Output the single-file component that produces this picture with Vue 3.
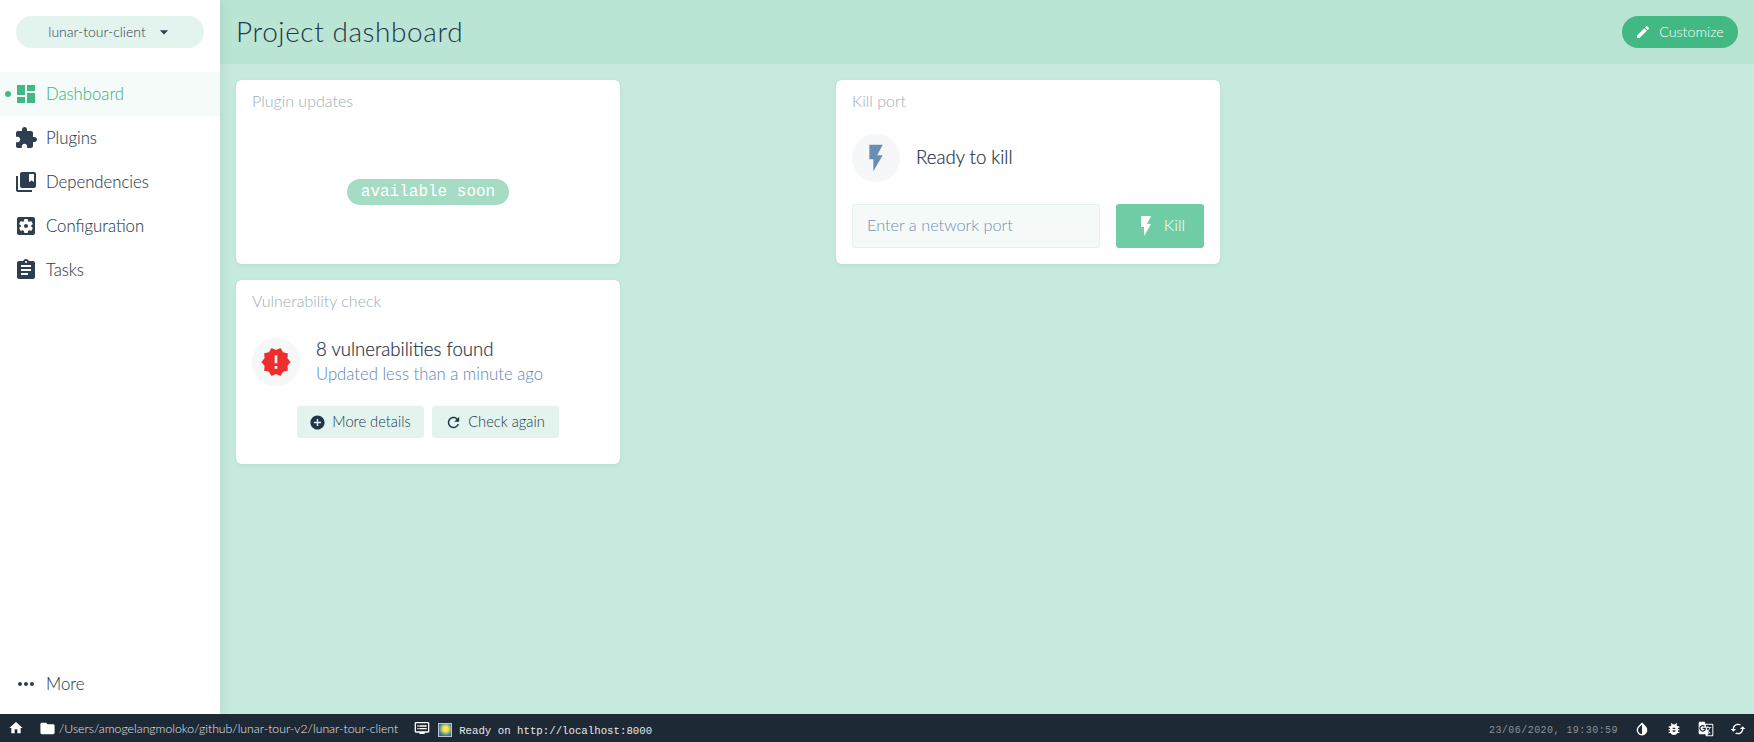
<script setup>
const I = {
  dashboard: 'M3 13h8V3H3v10zm0 8h8v-6H3v6zm10 0h8V11h-8v10zm0-18v6h8V3h-8z',
  extension: 'M20.5 11H19V7c0-1.1-.9-2-2-2h-4V3.5C13 2.12 11.88 1 10.5 1S8 2.12 8 3.5V5H4c-1.1 0-1.99.9-1.99 2v3.8H3.5c1.49 0 2.7 1.21 2.7 2.7s-1.21 2.7-2.7 2.7H2V20c0 1.1.9 2 2 2h3.8v-1.5c0-1.49 1.21-2.7 2.7-2.7 1.49 0 2.7 1.21 2.7 2.7V22H17c1.1 0 2-.9 2-2v-4h1.5c1.38 0 2.5-1.12 2.5-2.5S21.88 11 20.5 11z',
  collections: 'M4 6H2v14c0 1.1.9 2 2 2h14v-2H4V6zm16-4H8c-1.1 0-2 .9-2 2v12c0 1.1.9 2 2 2h12c1.1 0 2-.9 2-2V4c0-1.1-.9-2-2-2zm0 10l-2.5-1.5L15 12V4h5v8z',
  settings: 'M12 10c-1.1 0-2 .9-2 2s.9 2 2 2 2-.9 2-2-.9-2-2-2zm7-7H5c-1.11 0-2 .9-2 2v14c0 1.1.89 2 2 2h14c1.11 0 2-.9 2-2V5c0-1.1-.89-2-2-2zm-1.75 9c0 .23-.02.46-.05.68l1.48 1.16c.13.11.17.3.08.45l-1.4 2.42c-.09.15-.27.21-.43.15l-1.74-.7c-.36.28-.76.51-1.18.69l-.26 1.85c-.03.17-.18.3-.35.3h-2.8c-.17 0-.32-.13-.35-.29l-.26-1.85c-.43-.18-.82-.41-1.18-.69l-1.74.7c-.16.06-.34 0-.43-.15l-1.4-2.42c-.09-.15-.05-.34.08-.45l1.48-1.16c-.03-.23-.05-.46-.05-.69 0-.23.02-.46.05-.68l-1.48-1.16c-.13-.11-.17-.3-.08-.45l1.4-2.42c.09-.15.27-.21.43-.15l1.74.7c.36-.28.76-.51 1.18-.69l.26-1.85c.03-.17.18-.3.35-.3h2.8c.17 0 .32.13.35.29l.26 1.85c.43.18.82.41 1.18.69l1.74-.7c.16-.06.34 0 .43.15l1.4 2.42c.09.15.05.34-.08.45l-1.48 1.16c.03.23.05.46.05.69z',
  assignment: 'M19 3h-4.18C14.4 1.84 13.3 1 12 1c-1.3 0-2.4.84-2.82 2H5c-1.1 0-2 .9-2 2v14c0 1.1.9 2 2 2h14c1.1 0 2-.9 2-2V5c0-1.1-.9-2-2-2zm-7 0c.55 0 1 .45 1 1s-.45 1-1 1-1-.45-1-1 .45-1 1-1zm2 14H7v-2h7v2zm3-4H7v-2h10v2zm0-4H7V7h10v2z',
  more: 'M6 10c-1.1 0-2 .9-2 2s.9 2 2 2 2-.9 2-2-.9-2-2-2zm12 0c-1.1 0-2 .9-2 2s.9 2 2 2 2-.9 2-2-.9-2-2-2zm-6 0c-1.1 0-2 .9-2 2s.9 2 2 2 2-.9 2-2-.9-2-2-2z',
  edit: 'M3 17.25V21h3.75L17.81 9.94l-3.75-3.75L3 17.25zM20.71 7.04c.39-.39.39-1.02 0-1.41l-2.34-2.34c-.39-.39-1.02-.39-1.41 0l-1.83 1.83 3.75 3.75 1.83-1.83z',
  flash: 'M7 2v11h3v9l7-12h-4l4-8z',
  releases: 'M23 12l-2.44-2.78.34-3.68-3.61-.82-1.89-3.18L12 3 8.6 1.54 6.71 4.72l-3.61.81.34 3.68L1 12l2.44 2.78-.34 3.69 3.61.82 1.89 3.18L12 21l3.4 1.46 1.89-3.18 3.61-.82-.34-3.68L23 12zm-10 5h-2v-2h2v2zm0-4h-2V7h2v6z',
  add: 'M12 2C6.48 2 2 6.48 2 12s4.48 10 10 10 10-4.48 10-10S17.52 2 12 2zm5 11h-4v4h-2v-4H7v-2h4V7h2v4h4v2z',
  refresh: 'M17.65 6.35C16.2 4.9 14.21 4 12 4c-4.42 0-7.99 3.58-7.99 8s3.57 8 7.99 8c3.73 0 6.84-2.55 7.73-6h-2.08c-.82 2.33-3.04 4-5.65 4-3.31 0-6-2.69-6-6s2.69-6 6-6c1.66 0 3.14.69 4.22 1.78L13 11h7V4l-2.35 2.35z',
  home: 'M10 20v-6h4v6h5v-8h3L12 3 2 12h3v8z',
  folder: 'M10 4H4c-1.1 0-1.99.9-1.99 2L2 18c0 1.1.9 2 2 2h16c1.1 0 2-.9 2-2V8c0-1.1-.9-2-2-2h-8l-2-2z',
  dvr: 'M21 3H3c-1.1 0-2 .9-2 2v12c0 1.1.9 2 2 2h5v2h8v-2h5c1.1 0 1.99-.9 1.99-2L23 5c0-1.1-.9-2-2-2zm0 14H3V5h18v12zm-2-9H8v2h11V8zm0 4H8v2h11v-2zM7 8H5v2h2V8zm0 4H5v2h2v-2z',
  invert: 'M17.66 7.93L12 2.27 6.34 7.93c-3.12 3.12-3.12 8.19 0 11.31C7.9 20.8 9.95 21.58 12 21.58c2.05 0 4.1-.78 5.66-2.34 3.12-3.12 3.12-8.19 0-11.31zM12 19.59c-1.6 0-3.11-.62-4.24-1.76C6.62 16.69 6 15.19 6 13.59s.62-3.11 1.76-4.24L12 5.1v14.49z',
  bug: 'M20 8h-2.81c-.45-.78-1.07-1.45-1.82-1.96L17 4.41 15.59 3l-2.17 2.17C12.96 5.06 12.49 5 12 5c-.49 0-.96.06-1.41.17L8.41 3 7 4.41l1.62 1.63C7.88 6.55 7.26 7.22 6.81 8H4v2h2.09c-.05.33-.09.66-.09 1v1H4v2h2v1c0 .34.04.67.09 1H4v2h2.81c1.04 1.79 2.97 3 5.19 3s4.15-1.21 5.19-3H20v-2h-2.09c.05-.33.09-.66.09-1v-1h2v-2h-2v-1c0-.34-.04-.67-.09-1H20V8zm-6 8h-4v-2h4v2zm0-4h-4v-2h4v2z',
  translate: 'M21 4H11l-1-3H3c-1.1 0-2 .9-2 2v15c0 1.1.9 2 2 2h8l1 3h9c1.1 0 2-.9 2-2V6c0-1.1-.9-2-2-2zM7 16c-2.76 0-5-2.24-5-5s2.24-5 5-5c1.35 0 2.48.5 3.34 1.3L8.98 8.61c-.37-.35-1.01-.76-1.98-.76-1.7 0-3.08 1.41-3.08 3.15 0 1.74 1.38 3.15 3.08 3.15 1.97 0 2.71-1.41 2.82-2.15H7v-1.78h4.79c.04.26.08.52.08.87C11.87 14.03 9.83 16 7 16zm6.17-5.42h3.7c-.43 1.25-1.11 2.43-2.05 3.46-.31-.35-.6-.72-.86-1.1l-.79-2.36zm8.33 9.92c0 .55-.45 1-1 1H14l2-2.5-1.04-3.1 3.1 3.1.92-.92-3.3-3.25.02-.02c1.13-1.25 1.93-2.69 2.4-4.22H20v-1.3h-4.53V8h-1.29v1.29h-1.44L11.46 5.5h9.04c.55 0 1 .45 1 1v14z',
  cached: 'M19 8l-4 4h3c0 3.31-2.69 6-6 6-1.01 0-1.97-.25-2.8-.7l-1.46 1.46C8.97 19.54 10.43 20 12 20c4.42 0 8-3.58 8-8h3l-4-4zM6 12c0-3.31 2.69-6 6-6 1.01 0 1.97.25 2.8.7l1.46-1.46C15.03 4.46 13.57 4 12 4c-4.42 0-8 3.58-8 8H1l4 4 4-4H6z',
  drop: 'M7 10l5 5 5-5z'
}
const nav = [
  { label: 'Dashboard', icon: I.dashboard, active: true },
  { label: 'Plugins', icon: I.extension },
  { label: 'Dependencies', icon: I.collections },
  { label: 'Configuration', icon: I.settings },
  { label: 'Tasks', icon: I.assignment }
]
const statusIcons = [I.invert, I.bug, I.translate, I.cached]
</script>

<template>
  <div class="app">
    <div class="main">
      <aside class="sidebar">
        <div class="switcher">
          <span>lunar-tour-client</span>
          <svg class="drop" viewBox="0 0 24 24"><path :d="I.drop" /></svg>
        </div>
        <nav class="nav">
          <a v-for="n in nav" :key="n.label" class="nav-item" :class="{ active: n.active }">
            <svg class="nav-icon" viewBox="0 0 24 24"><path :d="n.icon" /></svg>
            <span>{{ n.label }}</span>
          </a>
        </nav>
        <a class="nav-item more">
          <svg class="nav-icon" viewBox="0 0 24 24"><path :d="I.more" /></svg>
          <span>More</span>
        </a>
      </aside>
      <div class="content">
        <header class="topbar">
          <h1>Project dashboard</h1>
          <button class="customize">
            <svg viewBox="0 0 24 24"><path :d="I.edit" /></svg>
            <span>Customize</span>
          </button>
        </header>
        <div class="board">
          <div class="col">
            <section class="card">
              <h2>Plugin updates</h2>
              <div class="soon-wrap"><span class="soon">available soon</span></div>
            </section>
            <section class="card vuln">
              <h2>Vulnerability check</h2>
              <div class="status-row">
                <div class="disc"><svg class="red" viewBox="0 0 24 24"><path :d="I.releases" /></svg></div>
                <div>
                  <div class="big">8 vulnerabilities found</div>
                  <div class="sub">Updated less than a minute ago</div>
                </div>
              </div>
              <div class="actions">
                <button class="flat"><svg viewBox="0 0 24 24"><path :d="I.add" /></svg><span>More details</span></button>
                <button class="flat"><svg viewBox="0 0 24 24"><path :d="I.refresh" /></svg><span>Check again</span></button>
              </div>
            </section>
          </div>
          <div class="col">
            <section class="card kill">
              <h2>Kill port</h2>
              <div class="status-row">
                <div class="disc"><svg class="blue" viewBox="0 0 24 24"><path :d="I.flash" /></svg></div>
                <div class="big">Ready to kill</div>
              </div>
              <div class="kill-form">
                <input class="port" placeholder="Enter a network port" />
                <button class="kill-btn"><svg viewBox="0 0 24 24"><path :d="I.flash" /></svg><span>Kill</span></button>
              </div>
            </section>
          </div>
        </div>
      </div>
    </div>
    <footer class="statusbar">
      <svg class="si home" viewBox="0 0 24 24"><path :d="I.home" /></svg>
      <svg class="si folder" viewBox="0 0 24 24"><path :d="I.folder" /></svg>
      <span class="path">/Users/amogelangmoloko/github/lunar-tour-v2/lunar-tour-client</span>
      <svg class="si dvr" viewBox="0 0 24 24"><path :d="I.dvr" /></svg>
      <svg class="proj" viewBox="0 0 14 14">
        <defs>
          <radialGradient id="glow" cx="0.55" cy="0.42" r="0.55">
            <stop offset="0.35" stop-color="#f6e84f" />
            <stop offset="1" stop-color="#2f6fa8" />
          </radialGradient>
        </defs>
        <rect class="proj-rect" x="0.5" y="0.5" width="13" height="13" fill="url(#glow)" stroke="#b9c6d2" />
      </svg>
      <span class="log">Ready on http://localhost:8000</span>
      <span class="spacer"></span>
      <span class="clock">23/06/2020, 19:30:59</span>
      <svg v-for="(s, i) in statusIcons" :key="i" class="si end" viewBox="0 0 24 24"><path :d="s" /></svg>
    </footer>
  </div>
</template>

<style>
html, body { margin: 0; padding: 0; height: 100%; overflow: hidden; }
</style>

<style scoped>
* { box-sizing: border-box; }
svg path { fill: currentColor; }
.app {
  width: 1754px; height: 742px; display: flex; flex-direction: column;
  font-family: Lato, "Noto Sans", sans-serif; color: #2c3e50; background: #c6eadd;
}
.main { flex: 1; display: flex; min-height: 0; }
.sidebar {
  width: 220px; flex: none; background: #fff; display: flex; flex-direction: column;
  box-shadow: 0 0 12px rgba(44, 62, 80, .14); position: relative; z-index: 2;
  padding-bottom: 8px;
}
.switcher {
  margin: 16px 16px 24px; height: 32px; border-radius: 16px; background: #e3f4ee;
  display: flex; align-items: center; justify-content: center; gap: 8px;
  font-size: 14px; font-weight: 300; color: #2c3e50; padding-left: 2px; line-height: 30px;
}
.drop { width: 20px; height: 20px; color: #2c3e50; }
.nav { flex: 1; }
.nav-item {
  height: 44px; display: flex; align-items: center; padding: 0 0 1px 14px; gap: 8px;
  font-size: 16.7px; font-weight: 300; color: #2c3e50; position: relative;
  -webkit-text-stroke: .1px currentColor;
}
.nav-icon { width: 24px; height: 24px; flex: none; color: #2c3e50; margin-top: 1px; }
.nav-item.active { background: #f5fbf9; color: #42b983; }
.nav-item.active .nav-icon { color: #42b983; }
.nav-item.active::before {
  content: ""; position: absolute; left: 5px; top: 19px; width: 6px; height: 6px;
  border-radius: 50%; background: #42b983;
}
.more { flex: none; }
.content { flex: 1; min-width: 0; display: flex; flex-direction: column; }
.topbar {
  height: 64px; flex: none; background: #bae5d4; display: flex; align-items: center;
  justify-content: space-between; padding: 0 16px;
}
h1 { margin: 0 0 3px; font-size: 28px; font-weight: 300; color: #23364a; letter-spacing: .58px; }
.customize {
  height: 32px; width: 116px; border: 0; border-radius: 16px; background: #42b983; color: #fff;
  display: flex; align-items: center; justify-content: center; gap: 8px;
  font: 300 14.3px/30px Lato, sans-serif; padding: 0 1px 1px 0;
}
.customize svg { width: 16px; height: 16px; margin-top: 1px; }
.board { flex: 1; display: flex; gap: 216px; padding: 16px; }
.col { width: 384px; display: flex; flex-direction: column; gap: 16px; }
.card {
  height: 184px; background: #fff; border-radius: 6px; padding: 11px 16px 16px;
  box-shadow: 0 1px 4px rgba(44, 62, 80, .08); display: flex; flex-direction: column;
}
h2 { margin: 0; font-size: 16px; font-weight: 300; color: #9dacb9; line-height: 20px; }
.soon-wrap { flex: 1; display: flex; align-items: center; justify-content: center; padding-top: 9px; margin-bottom: -16px; }
.soon {
  background: #a6dcc4; color: #fff; border-radius: 13px; height: 26px;
  padding: 0 14px; font: 16px/26px "Liberation Mono", monospace;
}
.status-row { display: flex; align-items: center; gap: 16px; margin-top: 27px; }
.disc {
  width: 48px; height: 48px; border-radius: 50%; background: #f6f7f8; flex: none;
  display: flex; align-items: center; justify-content: center;
}
.disc svg { width: 32px; height: 32px; }
.red { color: #ee2e2e; }
.blue { color: #6a8db4; }
.big { font-size: 18.6px; font-weight: 300; color: #1f3145; line-height: 22px; -webkit-text-stroke: .2px currentColor; }
.sub { font-size: 16.7px; font-weight: 300; color: #5f86b2; line-height: 24px; margin-top: 2px; }
.actions { display: flex; justify-content: center; gap: 8px; margin-top: 20px; }
.flat {
  height: 32px; width: 127px; border: 0; border-radius: 3px; background: #e3f4ee; color: #22344a;
  display: flex; align-items: center; justify-content: center; gap: 6px;
  font: 300 14.7px/30px Lato, sans-serif; padding: 0 1px 2px 0;
}
.flat svg { width: 17px; height: 17px; margin-top: 2px; }
.kill .status-row { margin-top: 23px; }
.kill .big { margin-bottom: 2px; }
.kill-form { display: flex; gap: 16px; margin-top: 22px; }
.port {
  width: 248px; height: 44px; border: 1px solid #e3f4ee; border-radius: 3px; background: #f5faf9;
  padding: 0 14px 3px; font: 300 16.3px Lato, sans-serif; outline: none;
}
.port::placeholder { color: #6f90b6; opacity: 1; }
.kill-btn {
  width: 88px; height: 44px; border: 0; border-radius: 3px; background: #70cca4; color: #fff;
  display: flex; align-items: center; justify-content: center; gap: 6px;
  font: 300 16.5px Lato, sans-serif; padding: 0 1px 2px 0;
}
.kill-btn svg { width: 24px; height: 24px; margin-top: 2px; }
.statusbar {
  height: 28px; flex: none; background: #1d2935; color: #fff; display: flex; align-items: center;
  position: relative; z-index: 3; padding-right: 8px;
}
.si { width: 16px; height: 16px; flex: none; color: #fff; }
.home { margin-left: 8px; }
.folder { margin-left: 15px; width: 17px; height: 17px; }
.path { font-size: 12.25px; font-weight: 300; color: #e4e8ec; margin-left: 3px; }
.dvr { margin-left: 16px; }
.proj { width: 14px; height: 14px; margin-left: 8px; margin-top: 4px; flex: none; }
.log { font: 10.73px "Liberation Mono", monospace; color: #e6e8ea; margin-left: 7px; margin-top: 6px; }
.spacer { flex: 1; }
.clock { font: 10px "Liberation Mono", monospace; letter-spacing: .45px; color: #8b949c; margin-right: 16px; margin-top: 4px; }
.end { margin-left: 16px; margin-top: 2px; }
.clock + .end { margin-left: 0; }
</style>
